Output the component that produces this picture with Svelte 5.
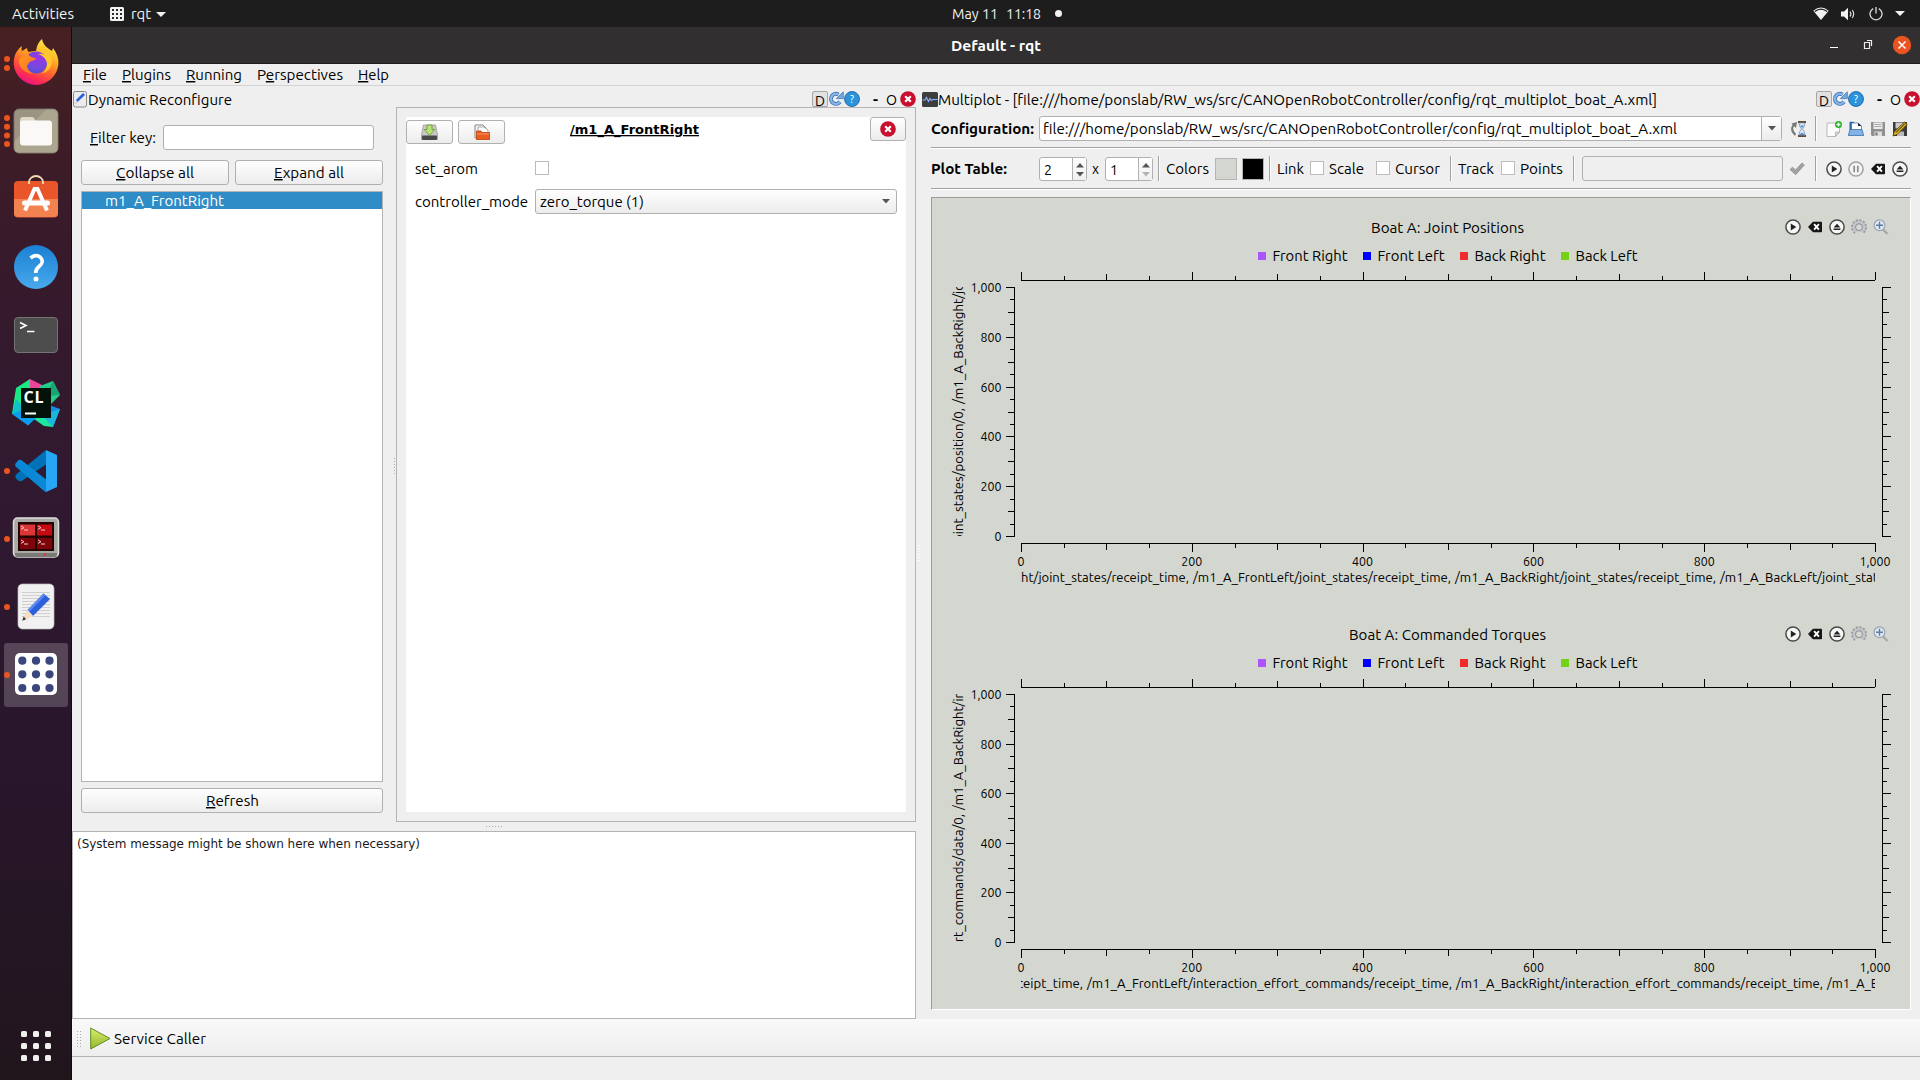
<script>
  const menus = [
    { label: 'File', w: 24, accel: 0 },
    { label: 'Plugins', w: 49, accel: 0 },
    { label: 'Running', w: 56, accel: 0 },
    { label: 'Perspectives', w: 86, accel: 1 },
    { label: 'Help', w: 31, accel: 0 }
  ];
  const launchers = [
    { id: 'firefox', dots: [28, 37] },
    { id: 'files', dots: [19, 27.7, 36.4, 45] },
    { id: 'software', dots: [] },
    { id: 'help', dots: [] },
    { id: 'terminal', dots: [] },
    { id: 'clion', dots: [] },
    { id: 'vscode', dots: [32] },
    { id: 'terminator', dots: [32] },
    { id: 'gedit', dots: [32] },
    { id: 'rqt', dots: [32], active: true }
  ];
  const legend = [
    { x: 326, w: 75, label: 'Front Right', color: '#ad54ff' },
    { x: 431, w: 67, label: 'Front Left', color: '#0000ff' },
    { x: 528, w: 71, label: 'Back Right', color: '#f02b2b' },
    { x: 629, w: 62, label: 'Back Left', color: '#73d216' }
  ];
  // Coordinates inside a plot are relative to the canvas' top-left corner.
  const plots = [
    {
      title: 'Boat A: Joint Positions', tx: 439, tw: 153, axisH: 249,
      xparts: [
        { x: 90, w: 168, s: 'ht/joint_states/receipt_time,' },
        { x: 262, w: 258, s: '/m1_A_FrontLeft/joint_states/receipt_time,' },
        { x: 524, w: 261, s: '/m1_A_BackRight/joint_states/receipt_time,' },
        { x: 789, w: 158, s: '/m1_A_BackLeft/joint_stat' }
      ],
      yparts: [
        { y: 344, w: 134, s: 'oint_states/position/0,' },
        { y: 206, w: 121, s: '/m1_A_BackRight/jo' }
      ]
    },
    {
      title: 'Boat A: Commanded Torques', tx: 417, tw: 197, axisH: 248,
      xparts: [
        { x: 86, w: 66, s: 'ceipt_time,' },
        { x: 156, w: 365, s: '/m1_A_FrontLeft/interaction_effort_commands/receipt_time,' },
        { x: 525, w: 367, s: '/m1_A_BackRight/interaction_effort_commands/receipt_time,' },
        { x: 896, w: 52, s: '/m1_A_B' }
      ],
      yparts: [
        { y: 337, w: 128, s: 'rt_commands/data/0,' },
        { y: 205, w: 119, s: '/m1_A_BackRight/in' }
      ]
    }
  ];
  const ticks = Array.from({ length: 21 }, (_, i) => i);
  const labels = ['0', '200', '400', '600', '800', '1,000'];
  const tickLen = (i) => (i % 4 === 0 ? 8 : i % 2 === 0 ? 6 : 4);
  const labelW = (s) => (s === '0' ? 7 : s === '1,000' ? 31 : 21);
</script>

{#snippet t(s, w, cls = '', accel = -1)}
  <svg class="t {cls}" width={w} height="19"><text x="0" y="15" textLength={w} lengthAdjust="spacingAndGlyphs">{#if accel < 0}{s}{:else}{s.slice(0, accel)}<tspan class="u">{s[accel]}</tspan>{s.slice(accel + 1)}{/if}</text></svg>
{/snippet}

{#snippet redClose()}
  <svg width="16" height="16" viewBox="0 0 16 16"><circle cx="8" cy="8" r="7.8" fill="#c8102e" /><path d="M5.2 5.2l5.6 5.6M10.8 5.2l-5.6 5.6" stroke="#fff" stroke-width="2.2" /></svg>
{/snippet}

{#snippet dockButtons()}
  <div class="dockbtns">
    <span class="dbtn">{@render t('D', 10)}</span>
    <svg width="16" height="16" viewBox="0 0 16 16"><path d="M12 10.8A5 5 0 1 1 10.6 3.6" fill="none" stroke="#4079bd" stroke-width="4" /><path d="M12 10.8A5 5 0 1 1 10.6 3.6" fill="none" stroke="#8ab4e4" stroke-width="2.3" /><path d="M8.4 7.6L15.3 .8V7.6Z" fill="#79a8dd" stroke="#4079bd" stroke-width=".8" /></svg>
    <svg width="16" height="16" viewBox="0 0 16 16"><circle cx="8" cy="8" r="7.5" fill="#2b93dc" stroke="#2268a2" stroke-width=".9" /><text class="q" x="8" y="12" text-anchor="middle">?</text></svg>
    <span class="min">{@render t('-', 5, 'bold')}</span>
    <span class="float">{@render t('O', 11)}</span>
    {@render redClose()}
  </div>
{/snippet}

{#snippet playIcon()}
  <svg width="16" height="16" viewBox="0 0 16 16"><circle cx="8" cy="8" r="7.1" fill="#f6f6f6" stroke="#4a4a4a" stroke-width="1.5" /><path d="M5.8 4.5L11.3 8L5.8 11.5Z" fill="#222" /></svg>
{/snippet}
{#snippet ejectIcon()}
  <svg width="16" height="16" viewBox="0 0 16 16"><circle cx="8" cy="8" r="7.1" fill="#f6f6f6" stroke="#4a4a4a" stroke-width="1.5" /><path d="M4.6 8.5L8 4.7L11.4 8.5ZM4.6 9.6h6.8v1.5H4.6Z" fill="#222" /></svg>
{/snippet}
{#snippet clearIcon()}
  <svg width="16" height="16" viewBox="0 0 16 16"><path d="M1 8L6 2.7H14.3Q15 2.7 15 3.4V12.6Q15 13.3 14.3 13.3H6Z" fill="#161616" /><path d="M7.1 5.2L11.9 10.6M11.9 5.2L7.1 10.6" stroke="#fff" stroke-width="1.9" /></svg>
{/snippet}

<div class="desktop">
  <header class="topbar">
    <div class="tl">
      {@render t('Activities', 62)}
      <svg class="appico" width="14" height="14" viewBox="0 0 14 14"><rect width="14" height="14" rx="1.5" fill="#f2f2f2" /><g fill="#2a2a2a">{#each [2, 6, 10] as y}{#each [2, 6, 10] as x}<rect {x} {y} width="2" height="2" />{/each}{/each}</g></svg>
      {@render t('rqt', 20)}
      <svg class="caret" width="10" height="5" viewBox="0 0 10 5"><path d="M0 0H10L5 5Z" fill="#f2f2f2" /></svg>
    </div>
    <div class="clock">{@render t('May 11', 46)}{@render t('11:18', 35)}<i></i></div>
    <div class="tr">
      <svg width="16" height="13" viewBox="0 0 16 13"><path d="M.3 3.8Q8-2.6 15.7 3.8L8 13Z" fill="#f2f2f2" /><path d="M1.8 4.5Q8-.3 14.2 4.5" fill="none" stroke="#1d1d1d" stroke-width="1.3" /></svg>
      <svg width="16" height="14" viewBox="0 0 16 14"><path d="M0 4.5H3L7 .8V13.2L3 9.5H0Z" fill="#f2f2f2" /><path d="M9 4.5Q10.8 7 9 9.5M11.3 3Q14 7 11.3 11" fill="none" stroke="#ddd" stroke-width="1.2" /></svg>
      <svg width="14" height="14" viewBox="0 0 14 14"><path d="M4.2 1.6A6 6 0 1 0 9.8 1.6M7 0V6.5" fill="none" stroke="#ddd" stroke-width="1.3" /></svg>
      <svg width="10" height="5" viewBox="0 0 10 5"><path d="M0 0H10L5 5Z" fill="#f2f2f2" /></svg>
    </div>
  </header>

  <div class="body">
    <nav class="dock">
      {#each launchers as l}
        <svg class="launcher" width="72" height="64" viewBox="0 0 72 64">
          {#if l.active}<rect x="4" y="0" width="64" height="64" rx="3" fill="#fff" fill-opacity=".2" />{/if}
          {#each l.dots as y}<circle cx="7" cy={y} r="3" fill="#e95420" />{/each}
          {#if l.id === 'firefox'}
            <defs>
              <linearGradient id="ffa" x1=".8" y1="0" x2=".35" y2="1"><stop offset="0" stop-color="#fff44f" /><stop offset=".35" stop-color="#ffb224" /><stop offset=".6" stop-color="#ff6b2b" /><stop offset=".85" stop-color="#ff2a55" /><stop offset="1" stop-color="#e3158a" /></linearGradient>
              <radialGradient id="ffb" cx=".6" cy=".3" r=".8"><stop offset="0" stop-color="#a034e8" /><stop offset=".6" stop-color="#6f4be0" /><stop offset="1" stop-color="#4a50c8" /></radialGradient>
              <linearGradient id="ffc" x1="0" y1="0" x2="1" y2="1"><stop offset="0" stop-color="#ff9a1c" /><stop offset="1" stop-color="#ff6a2c" /></linearGradient>
            </defs>
            <path d="M22 15C21 18 22 20 22 20L27 17Q27 20 29 21C32 20 34 20 36 20Q37 12 42 8Q43 14 49 18L52 20L53 17Q59 25 58.4 33A22.4 22.4 0 0 1 13.7 33Q13.500 24 18 19Q19 17 22 15Z" fill="url(#ffa)" />
            <circle cx="36" cy="31.500" r="11" fill="url(#ffb)" />
            <path d="M36 20Q42 19 45 24Q41 22 38 23Q45 25 47 32Q48 39 41 43Q52 40 52 29Q51 20 43 15Q38 17 36 20Z" fill="#ffc62e" />
            <path d="M20 27Q24 23 29 24Q31 27 36 27Q35 30 31 30Q28 32 27 35Q28 41 35 43Q24 43 20 35Q18 30 20 27Z" fill="url(#ffc)" />
          {:else if l.id === 'files'}
            <rect x="14" y="10" width="44" height="44" rx="5" fill="#9b9482" stroke="#777262" />
            <path d="M46 10.500H53Q57.500 10.500 57.500 15V49Q57.500 53.500 53 53.500H19Q14.500 53.500 14.500 49V42Z" fill="#aca690" />
            <path d="M20 25V21Q20 18 23 18H32Q34 18 34.500 20Q35 22 37 22H49Q52 22 52 25Z" fill="#ddd8ca" />
            <rect x="20" y="21.500" width="32" height="25" rx="3" fill="#faf9f7" />
          {:else if l.id === 'software'}
            <rect x="14" y="14" width="44" height="36.500" rx="4" fill="#e9562a" />
            <path d="M14 32H58V46Q58 50 54 50H18Q14 50 14 46Z" fill="#f28350" />
            <path d="M29 17V15.500A7 6.500 0 0 1 43 15.500V17" fill="none" stroke="#f3dbb4" stroke-width="1.800" />
            <path d="M25 43.500L34.500 22H37.500L47 43.500" fill="none" stroke="#fff" stroke-width="4" /><rect x="22" y="33.500" width="28" height="5" rx="2.500" fill="#fff" />
          {:else if l.id === 'help'}
            <defs><linearGradient id="hb" x1="0" y1="0" x2="0" y2="1"><stop offset="0" stop-color="#1b80d3" /><stop offset="1" stop-color="#48a9ec" /></linearGradient></defs>
            <circle cx="36" cy="32" r="22" fill="url(#hb)" />
            <path d="M30.500 23Q36 18.500 40.500 22.500Q44.500 27 39 31.500Q35.700 34 35.700 38" fill="none" stroke="#fff" stroke-width="3.600" /><circle cx="36" cy="44" r="2.500" fill="#fff" />
          {:else if l.id === 'terminal'}
            <rect x="14.500" y="14.500" width="43" height="35" rx="3.500" fill="#4d4d4d" stroke="#747474" /><path d="M20 19.500L26 22.500L20 25.500" fill="none" stroke="#fff" stroke-width="1.600" /><path d="M27 28.500H34.500" stroke="#fff" stroke-width="1.500" />
          {:else if l.id === 'clion'}
            <path d="M16 17L30 8V28L12 43Z" fill="#19ea83" /><path d="M30 8L42 14L38 24L30 20Z" fill="#f0439a" /><path d="M40 15L53 10L60 24L48 36L38 22Z" fill="#21cf8b" /><path d="M53 10L45 25L60 24Z" fill="#1ba574" />
            <path d="M12 43L22 36L36 47L28 54.500Z" fill="#0b9df0" /><path d="M16 28L12 43L26 38Z" fill="#11bfc6" /><path d="M49 34L60 38L53 56L42 44Z" fill="#158dec" /><path d="M34 48L50 40L53 56L44 55Z" fill="#1ce8a0" /><path d="M42 44L60 38L53 56Z" fill="#1fb4d9" />
            <rect x="21" y="17" width="30" height="30" fill="#03130b" /><text class="cl" x="23.500" y="32" textLength="20">CL</text><rect x="25" y="41.500" width="11" height="2" fill="#fff" />
          {:else if l.id === 'vscode'}
            <path d="M46 11L48 24L22.500 41.500Q19 44 15.500 38.500L15.500 36Z" fill="#0072b8" /><path d="M15.200 25L18 21.500Q20 20 22 21.500L48 42L46 53Q44.500 52.500 43 51L15.500 27.500Z" fill="#0a88d6" />
            <path d="M46 11L57 16V48L46 53Z" fill="#29a6f3" />
          {:else if l.id === 'terminator'}
            <rect x="13.500" y="11" width="45" height="39" rx="4" fill="#a9a9a5" stroke="#dededa" stroke-width="1.500" /><path d="M15 46H57V48Q57 50 54 50H18Q15 50 15 48Z" fill="#7a7a76" /><rect x="18" y="15" width="36" height="29" fill="#250303" />
            <rect x="20" y="17.500" width="15" height="11" fill="#dc3535" /><rect x="37" y="17.500" width="15" height="11" fill="#c40b12" /><rect x="20" y="31" width="15" height="11" fill="#7d0509" /><rect x="37" y="31" width="15" height="11" fill="#7d0509" />
            {#each [[20, 18], [37, 18], [20, 32], [37, 32]] as [x, y]}<path d="M{x + 1} {y + 1}l3 1.700l-3 1.700M{x + 4} {y + 5}h4" fill="none" stroke="#f4cccc" stroke-width="1" />{/each}
            <rect x="44" y="46.500" width="2" height="2" fill="#f22" />
          {:else if l.id === 'gedit'}
            <rect x="18" y="9" width="36" height="45" rx="4.500" fill="#f1f1f1" stroke="#bdbdbd" stroke-width=".7" />
            {#each Array.from({ length: 9 }, (_, i) => 17.500 + i * 3) as y}<path d="M22 {y}H50" stroke="#cfcfcf" stroke-width="1" />{/each}
            <path d="M27.500 35L43.500 18.500L50 24L33 41Z" fill="#2b5fdc" /><path d="M27.500 35L43.500 18.500L45.500 20.200L29.300 36.800Z" fill="#5b88f0" /><path d="M27.500 35L33 41L24 45.500L23.500 43Z" fill="#f7dcbf" /><path d="M23.700 41.500L26 44.300L22.200 45.700Z" fill="#333" />
          {:else}
            <rect x="15" y="10" width="42" height="42" rx="5" fill="#fff" />
            {#each [17.700, 31.300, 45] as y}{#each [22.300, 36, 49.500] as x}<circle cx={x} cy={y} r="4.100" fill="#3b477c" />{/each}{/each}
          {/if}
        </svg>
      {/each}
      <svg class="apps" width="72" height="30" viewBox="0 0 72 30">{#each [0, 12, 24] as y}{#each [21, 33, 45] as x}<rect {x} {y} width="6" height="6" rx="1.500" fill="#f0f0ec" />{/each}{/each}</svg>
    </nav>

    <section class="window">
      <div class="titlebar">
        <span></span>
        {@render t('Default - rqt', 90, 'bold')}
        <svg width="84" height="20" viewBox="0 0 84 20"><path d="M0 12.500H8" stroke="#fff" stroke-width="1" /><path d="M34.500 7.500H39.500V13.500H34.500ZM37 5.500H41.500V11" fill="none" stroke="#eee" stroke-width="1.200" /><circle cx="72" cy="10" r="9.200" fill="#e95420" /><path d="M68.500 6.500l7 7M75.500 6.500l-7 7" stroke="#fff" stroke-width="1.500" /></svg>
      </div>
      <div class="menubar">{#each menus as m}{@render t(m.label, m.w, '', m.accel)}{/each}</div>

      <main class="work">
        <div class="left">
          <div class="docktitle">
            <svg width="14" height="17" viewBox="0 0 14 17"><rect x=".5" y=".5" width="13" height="15.500" rx="2" fill="#ececec" stroke="#888" /><path d="M3 9l1.500 2L12 4L10 2Z" fill="#2b5fdc" /><path d="M2.500 12h1" stroke="#a88" /></svg>
            {@render t('Dynamic Reconfigure', 144)}
            {@render dockButtons()}
          </div>
          <div class="reconf">
            <div class="tree">
              <div class="filter">{@render t('Filter key:', 66, '', 0)}<div class="input"></div></div>
              <div class="pair"><div class="btn">{@render t('Collapse all', 78, '', 0)}</div><div class="btn">{@render t('Expand all', 70, '', 0)}</div></div>
              <div class="list"><div class="row">{@render t('m1_A_FrontRight', 119)}</div></div>
              <div class="btn">{@render t('Refresh', 53, '', 0)}</div>
            </div>
            <div class="frame">
              <svg class="grip" width="2" height="16">{#each [0, 3, 6, 9, 12, 15] as y}<rect x="0" {y} width="1" height="1" fill="#aaa" />{/each}</svg>
              <div class="params">
                <div class="ptop">
                  <div class="btn"><svg width="17" height="17" viewBox="0 0 17 17"><path d="M2.500 1H14.500L16.500 11V15.500H.5V11Z" fill="#c9c9c9" stroke="#999" stroke-width=".8" /><rect x="1" y="11.500" width="15" height="4.500" rx="1" fill="#474a47" /><path d="M6 1H11V5.500H13.700L8.500 11.500L3.300 5.500H6Z" fill="#b9e27a" stroke="#5c9a1c" stroke-width=".8" /></svg></div>
                  <div class="btn"><svg width="16" height="16" viewBox="0 0 16 16"><path d="M1 1H9L12 4V14H1Z" fill="#f4f4f4" stroke="#888" /><path d="M4 3H10L14 6V14H4Z" fill="#fff" stroke="#999" stroke-width=".8" /><path d="M2.500 7H7L8 8.500H15.500V15.500H2.500Z" fill="#e95c20" stroke="#bb3d0a" stroke-width=".8" /><path d="M3 10H15" stroke="#f7986a" /></svg></div>
                  <div class="ptitle">{@render t('/m1_A_FrontRight', 129, 'vera')}</div>
                  <div class="btn close">{@render redClose()}</div>
                </div>
                <div class="prow">{@render t('set_arom', 63)}<div class="check"></div></div>
                <div class="prow combo-row">{@render t('controller_mode', 113)}<div class="combo">{@render t('zero_torque (1)', 104)}<svg width="8" height="5"><path d="M0 0H8L4 4.500Z" fill="#555" /></svg></div></div>
              </div>
            </div>
          </div>
          <div class="split"><svg width="16" height="2">{#each [0, 3, 6, 9, 12, 15] as x}<rect {x} y="0" width="1" height="1" fill="#aaa" />{/each}</svg></div>
          <div class="message">{@render t('(System message might be shown here when necessary)', 343, 'msg')}</div>
        </div>

        <div class="vsplit"><svg width="4" height="16">{#each [0, 3, 6, 9, 12, 15] as y}<rect x="0" {y} width="1" height="1" fill="#fff" /><rect x="2" {y} width="1" height="1" fill="#fff" />{/each}</svg></div>

        <div class="right">
          <div class="docktitle">
            <svg width="16" height="15" viewBox="0 0 16 15"><rect width="16" height="15" rx="1.500" fill="#3c3e40" /><path d="M.5 8H3L4.500 5.500L6.500 9.500L8 6.500L9.500 8.500L11 7.500H15.500" fill="none" stroke="#8fb4ff" stroke-width="1.100" /></svg>
            {@render t('Multiplot - [file:///home/ponslab/RW_ws/src/CANOpenRobotController/config/rqt_multiplot_boat_A.xml]', 719)}
            {@render dockButtons()}
          </div>
          <div class="bar config">
            <div class="lab">{@render t('Configuration:', 103, 'bold')}</div>
            <div class="path">{@render t('file:///home/ponslab/RW_ws/src/CANOpenRobotController/config/rqt_multiplot_boat_A.xml', 634)}<div class="drop"><svg width="8" height="5"><path d="M0 0H8L4 4.500Z" fill="#555" /></svg></div></div>
            <svg class="hist" width="17" height="16" viewBox="0 0 17 16"><path d="M5.500 14Q0 9 3.500 4" fill="none" stroke="#777" stroke-width="2" /><path d="M1.500 2.500L7 1L6 7Z" fill="#777" /><path d="M8 1H16M8 15H16" stroke="#5d4a35" stroke-width="2" /><path d="M9 2H15Q15 5.500 12.500 8Q15 10.500 15 14H9Q9 10.500 11.500 8Q9 5.500 9 2Z" fill="#dce9f5" stroke="#7d94b0" stroke-width=".8" /><path d="M10 4.500H14L12 7ZM9.500 14Q12 9.500 14.500 14Z" fill="#4d8fd6" /></svg>
            <div class="vsep"></div>
            <div class="icons">
              <svg width="16" height="16" viewBox="0 0 16 16"><path d="M1 2H13.500V11L9.500 15.500H1Z" fill="#fbfbfb" stroke="#aaa" stroke-width=".8" /><path d="M9.500 15.500V11H13.500Z" fill="#ddd" stroke="#999" stroke-width=".6" /><circle cx="12.500" cy="3.500" r="3.500" fill="#22b322" /><path d="M10.500 3.500h4M12.500 1.500v4" stroke="#fff" stroke-width="1.300" /></svg>
              <svg width="16" height="16" viewBox="0 0 16 16"><path d="M1.500 .8H6V9H1.500Z" fill="#2b62ac" /><path d="M3.500 2H10L13.500 5V11H3.500Z" fill="#fff" stroke="#4673a8" stroke-width=".8" /><path d="M10 2V5H13.500" fill="#222" /><path d="M2 8.500H14L15.700 14.500H.3Z" fill="#82b3e6" stroke="#3a6dad" stroke-width=".8" /></svg>
              <svg width="16" height="16" viewBox="0 0 16 16"><path d="M1 1H15V15H2L1 14Z" fill="#909090" /><rect x="3.500" y="1.500" width="9" height="6.500" fill="#ececec" /><path d="M4.500 3.500H11.500M4.500 5.500H11.500" stroke="#aaa" /><rect x="4.500" y="10.500" width="7.500" height="4.500" fill="#ddd" /><rect x="5.500" y="11.500" width="2" height="3" fill="#777" /></svg>
              <svg width="16" height="16" viewBox="0 0 16 16"><path d="M1 1H15V15H2L1 14Z" fill="#3b3b3b" /><rect x="3.500" y="1.500" width="8" height="6" fill="#cacaca" /><rect x="5" y="10.500" width="7" height="4.500" fill="#bbb" /><path d="M1 15L2 11L12.500 1L15 3.500L5 13.500Z" fill="#dfb520" stroke="#493900" stroke-width=".8" /><path d="M4 11.500L13 2.500" stroke="#222" /></svg>
            </div>
          </div>
          <div class="hr"></div>
          <div class="bar table">
            <div class="lab">{@render t('Plot Table:', 76, 'bold')}</div>
            {#each [['2', '#555'], ['1', '#b3b3b3']] as [v, c], i}
              <div class="spin"><div class="val">{@render t(v, 8)}</div><div class="arrows"><svg width="8" height="5"><path d="M0 4.500H8L4 0Z" fill="#555" /></svg><svg width="8" height="5"><path d="M0 0H8L4 4.500Z" fill={c} /></svg></div></div>
              {#if i === 0}<span class="by">{@render t('x', 7)}</span>{/if}
            {/each}
            <div class="vsep s1"></div>
            <span class="colors">{@render t('Colors', 43)}</span>
            <div class="swatch"></div><div class="swatch dark"></div>
            <div class="vsep s2"></div>
            <span class="link">{@render t('Link', 27)}</span>
            <div class="check c1"></div>{@render t('Scale', 35)}
            <div class="check c2"></div>{@render t('Cursor', 45)}
            <div class="vsep s3"></div>
            <span class="track">{@render t('Track', 36)}</span>
            <div class="check c3"></div>{@render t('Points', 43)}
            <div class="vsep s4"></div>
            <div class="input off"></div>
            <svg class="tick" width="16" height="14" viewBox="0 0 16 14"><path d="M1 7.500L3.500 5.200L6.500 8L13 1L15.300 3L6.700 12.700Z" fill="#a2a2a2" stroke="#868686" stroke-width=".7" /></svg>
            <div class="vsep"></div>
            <div class="icons">
              {@render playIcon()}
              <svg width="16" height="16" viewBox="0 0 16 16"><circle cx="8" cy="8" r="7.100" fill="#f4f4f4" stroke="#a2a2a2" stroke-width="1.500" /><path d="M6.200 4.800v6.400M9.800 4.800v6.400" stroke="#8e8e8e" stroke-width="1.700" /></svg>
              {@render clearIcon()}
              {@render ejectIcon()}
            </div>
          </div>
          <div class="hr"></div>
          <div class="canvas">
            {#each plots as p}
              <div class="plot">
                <div class="ptools">
                  {@render playIcon()}{@render clearIcon()}{@render ejectIcon()}
                  <svg width="16" height="16" viewBox="0 0 16 16"><circle cx="8" cy="8.200" r="6.600" fill="none" stroke="#9a9aa2" stroke-width="2.600" stroke-dasharray="2.300 1.160" /><circle cx="8" cy="8.200" r="4.900" fill="none" stroke="#c4c4ca" stroke-width="2.800" /><circle cx="8" cy="8.200" r="3.500" fill="#d3d7cf" stroke="#85858c" stroke-width=".9" /><path d="M4 13.800Q8 10.500 12 13.800V16H4Z" fill="#d3d7cf" /></svg>
                  <svg width="16" height="16" viewBox="0 0 16 16"><path d="M10 10.500L14.500 15" stroke="#a8a8a8" stroke-width="2.400" /><circle cx="6.500" cy="6.300" r="5.400" fill="#dfe7f0" stroke="#98a5b5" stroke-width="1.200" /><path d="M3 6.300h7M6.500 2.800v7" stroke="#5d7ba3" stroke-width="1.400" /></svg>
                </div>
                <svg class="graph" width="978" height="407" viewBox="0 0 978 407">
                  <text x={p.tx} y="35" textLength={p.tw} lengthAdjust="spacingAndGlyphs">{p.title}</text>
                  {#each legend as l}
                    <rect x={l.x} y="54" width="8" height="8" fill={l.color} /><text x={l.x + 14.500} y="63" textLength={l.w} lengthAdjust="spacingAndGlyphs">{l.label}</text>
                  {/each}
                  <g class="axis">
                    <path d="M89 82.500H943M89 {p.axisH + 96.500}H944M82.500 89V{p.axisH + 90}M950.500 89V{p.axisH + 90}" />
                    {#each ticks as i}
                      {@const x = Math.round(89 + i * 42.7) + 0.5}
                      {@const y = Math.round(89 + (i * p.axisH) / 20) + 0.5}
                      <path d="M{x} 82v{-tickLen(i)}M{x} {p.axisH + 97}v{tickLen(i)}M82 {y}h{-tickLen(i)}M951 {y}h{tickLen(i)}" />
                    {/each}
                  </g>
                  <g class="small">
                    {#each labels as s, i}
                      <text x={89 + i * 170.8 - labelW(s) / 2} y={p.axisH + 119} textLength={labelW(s)} lengthAdjust="spacingAndGlyphs">{s}</text>
                      <text x={69.5 - labelW(s)} y={94 + p.axisH - (i * p.axisH) / 5} textLength={labelW(s)} lengthAdjust="spacingAndGlyphs">{s}</text>
                    {/each}
                  </g>
                  <svg class="small clip" x="89" y={p.axisH + 120} width="854" height="22" viewBox="90 0 854 22">
                    {#each p.xparts as a}<text x={a.x} y="15" textLength={a.w} lengthAdjust="spacingAndGlyphs">{a.s}</text>{/each}
                  </svg>
                  <svg class="small clip" x="15" y="89" width="22" height={p.axisH} viewBox="15 89 22 {p.axisH}">
                    {#each p.yparts as a}<text transform="translate(31 {a.y}) rotate(-90)" textLength={a.w} lengthAdjust="spacingAndGlyphs">{a.s}</text>{/each}
                  </svg>
                </svg>
              </div>
            {/each}
          </div>
        </div>
      </main>

      <div class="toolbar">
        <svg width="5" height="16">{#each [0, 3, 6, 9, 12, 15] as y}<rect x="0" {y} width="1" height="1" fill="#aaa" /><rect x="3" {y} width="1" height="1" fill="#aaa" />{/each}</svg>
        <svg class="run" width="21" height="23" viewBox="0 0 21 23"><defs><linearGradient id="pg" x1="0" y1="0" x2="0" y2="1"><stop offset="0" stop-color="#d9ee6b" /><stop offset="1" stop-color="#93b62c" /></linearGradient></defs><path d="M.7 1L20 11.500L.7 22Z" fill="url(#pg)" stroke="#5d8d23" /></svg>
        {@render t('Service Caller', 92)}
      </div>
      <div class="status"></div>
    </section>
  </div>
</div>

<style>
  :global(body) { margin: 0; overflow: hidden; }
  .desktop { width: 1920px; height: 1080px; display: flex; flex-direction: column; overflow: hidden; background: #efefef; font-family: Ubuntu, 'Noto Sans', sans-serif; font-size: 14.5px; color: #000; }
  .desktop * { box-sizing: border-box; }
  svg { display: block; flex: none; }
  text { fill: currentColor; white-space: pre; }
  .t { overflow: visible; }
  .bold { font-weight: 700; }
  .vera { font-family: 'DejaVu Sans', sans-serif; font-weight: 700; font-size: 13px; text-decoration: underline; }
  .msg { font-family: 'DejaVu Sans', sans-serif; font-size: 12px; }
  .u { text-decoration: underline; }
  .q { fill: #fff; font-size: 11px; }
  .cl { fill: #fff; font-size: 16px; font-weight: 700; font-family: 'Open Sans', sans-serif; }

  .topbar { height: 27px; flex: none; background: #1d1d1d; color: #f2f2f2; display: grid; grid-template-columns: 952px 1fr auto; align-items: center; }
  .tl { display: flex; align-items: center; padding-left: 12px; }
  .appico { margin: 0 7px 0 36px; }
  .caret { margin: 2px 0 0 5px; }
  .clock { display: flex; align-items: center; gap: 8px; }
  .clock i { width: 7px; height: 7px; border-radius: 50%; background: #f2f2f2; margin-left: 6px; }
  .tr { display: flex; align-items: center; gap: 12px; padding-right: 15px; }

  .body { flex: 1; display: flex; min-height: 0; }
  .dock { width: 72px; padding: 4px 0 19px; display: flex; flex-direction: column; gap: 4px; background: linear-gradient(#472022 0, #371a2b 220px, #301930 480px, #28162b 740px, #21151c 1053px); border-right: 1px solid #120a12; }
  .launcher { margin-right: -1px; }
  .apps { margin-top: auto; }

  .window { width: 1848px; display: flex; flex-direction: column; }
  .titlebar { height: 37px; background: #322f30; border-bottom: 1px solid #1c1a1b; color: #fff; display: grid; grid-template-columns: 879px 1fr 90px; align-items: center; }
  .menubar { height: 22px; border-bottom: 1px solid #d3d3d3; display: flex; align-items: center; gap: 15px; padding-left: 10.5px; }

  .work { height: 933px; display: flex; }
  .left { width: 844px; display: flex; flex-direction: column; }
  .vsplit { width: 6px; display: flex; align-items: center; justify-content: center; }
  .docktitle { height: 21px; padding-top: 6px; display: flex; align-items: center; flex: none; gap: 1px; }
  .left .docktitle { padding-left: 1px; }
  .right .docktitle { gap: 0; }
  .docktitle > svg:first-child { margin-bottom: 1px; }
  .dockbtns { display: flex; align-items: center; margin-left: auto; }
  .dockbtns > svg { margin-bottom: 1px; }
  .dbtn { width: 16px; height: 16px; border: 1px solid #a8a8a8; border-radius: 2px; background: #e1e1e1; display: flex; align-items: center; justify-content: center; margin-bottom: 1px; }
  .dbtn .t { margin-top: 2px; }
  .min { margin-left: 13px; }
  .float { margin: 0 3px 0 8px; }

  .reconf { height: 715px; display: flex; }
  .tree { width: 324px; padding: 18px 13px 9px 9px; display: flex; flex-direction: column; }
  .filter { display: flex; align-items: center; gap: 7px; padding: 0 9px; }
  .input { flex: 1; height: 25px; border: 1px solid #b0b0b0; border-radius: 3px; background: #fff; }
  .pair { display: flex; gap: 6px; margin: 10px 0 6px; }
  .btn { height: 25px; flex: 1; border: 1px solid #b0b0b0; border-radius: 3px; background: linear-gradient(#fefefe, #ececec); display: flex; align-items: center; justify-content: center; }
  .tree > .btn { flex: none; }
  .list { flex: 1; border: 1px solid #b4b4b4; background: #fff; margin-bottom: 6px; }
  .row { height: 17px; background: #308cc6; color: #fff; padding-left: 23px; display: flex; align-items: center; }
  .frame { width: 520px; border: 1px solid #b4b4b4; padding: 9px; position: relative; }
  .grip { position: absolute; left: -3px; top: 350px; }
  .params { height: 695px; background: #fff; }
  .ptop { display: flex; gap: 5px; padding-top: 3px; }
  .ptop .btn { width: 47px; height: 24px; flex: none; }
  .ptop .close { width: 36px; margin-top: -3px; }
  .ptitle { flex: 1; padding-left: 60px; margin-top: -1px; }
  .prow { display: flex; align-items: center; padding: 0 9px; height: 25px; margin-top: 12px; }
  .prow .check { margin-left: 57px; margin-bottom: 1px; }
  .combo-row { margin-top: 8px; }
  .combo { flex: 1; height: 25px; margin-left: 7px; padding: 0 6px 0 4px; border: 1px solid #b0b0b0; border-radius: 3px; background: linear-gradient(#fefefe, #ececec); display: flex; align-items: center; justify-content: space-between; }
  .check { width: 14px; height: 14px; border: 1px solid #bcbcbc; background: #fff; flex: none; }
  .split { height: 9px; display: flex; justify-content: center; padding-top: 4px; }
  .message { flex: 1; border: 1px solid #b4b4b4; background: #fff; padding: 1px 4px; color: #1a1a1a; }

  .right { width: 998px; display: flex; flex-direction: column; }
  .bar { display: flex; align-items: center; margin-left: 9px; height: 25px; flex: none; }
  .config { margin-top: 9px; }
  .table { margin: 7px 0 7px 9px; }
  .lab { width: 108px; }
  .path { width: 743px; height: 25px; border: 1px solid #b0b0b0; border-radius: 3px; background: #fff; padding-left: 3px; display: flex; align-items: center; justify-content: space-between; }
  .drop { width: 20px; height: 23px; border-left: 1px solid #b0b0b0; background: linear-gradient(#fefefe, #ececec); display: flex; align-items: center; justify-content: center; }
  .hist { margin: 0 8px; }
  .vsep { width: 2px; height: 25px; border-left: 1px solid #a2a2a2; border-right: 1px solid #fcfcfc; flex: none; }
  .icons { display: flex; gap: 6px; margin-left: 9px; }
  .hr { height: 2px; margin: 6px 9px 0 9px; border-top: 1px solid #a0a0a0; border-bottom: 1px solid #fff; flex: none; }
  .table + .hr { margin-top: 0; }
  .spin { width: 48px; height: 24px; border: 1px solid #b0b0b0; border-radius: 3px; background: #fff; display: flex; }
  .val { flex: 1; padding: 2px 0 0 4px; }
  .arrows { width: 14px; border-left: 1px solid #b0b0b0; background: linear-gradient(#fefefe, #f0f0f0); display: flex; flex-direction: column; align-items: center; justify-content: space-between; padding: 5px 0 3px; }
  .by { margin: 0 6px 0 5px; }
  .s1 { margin: 0 6px 0 5px; }
  .colors { margin-right: 6px; }
  .swatch { width: 22px; height: 22px; border: 1px solid #b4b4b4; background: #d3d7cf; margin-right: 5px; }
  .dark { background: #000; }
  .s2 { margin-right: 6px; }
  .check.c1 { margin: 0 5px 1px 6px; }
  .check.c2 { margin: 0 5px 1px 12px; }
  .s3 { margin: 0 6px 0 10px; }
  .check.c3 { margin: 0 5px 1px 7px; }
  .s4 { margin: 0 7px 0 10px; }
  .off { flex: none; width: 201px; background: #efefef; }
  .tick { margin: 0 10px 0 6px; }
  .canvas { width: 980px; height: 813px; margin: 7px 0 0 9px; background: #d3d7cf; border: 1px solid; border-color: #9b9b9b #fff #fff #9b9b9b; flex: none; overflow: hidden; }
  .plot { height: 407px; position: relative; }
  .ptools { position: absolute; right: 21px; top: 21px; display: flex; gap: 6px; }
  .axis { stroke: #000; stroke-width: 1; fill: none; }
  .small { font-size: 12.8px; }
  .clip { overflow: hidden; }

  .toolbar { height: 38px; border-bottom: 1px solid #b4b4b4; background: linear-gradient(#f9f9f9, #eeeeee); display: flex; align-items: center; padding: 2px 0 0 5px; }
  .run { margin: 0 3px 0 8px; }
  .status { flex: 1; background: #efefef; }
</style>
